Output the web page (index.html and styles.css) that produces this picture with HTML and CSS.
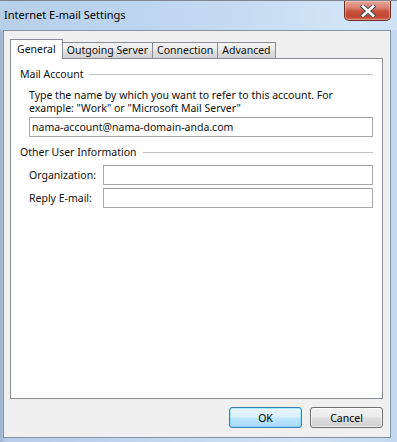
FILE: index.html
```html
<!DOCTYPE html>
<html lang="en">
<head>
<meta charset="utf-8">
<title>Internet E-mail Settings</title>
<link rel="stylesheet" href="styles.css">
</head>
<body>
<div class="window">
  <div class="titlebar">
    <span class="title">Internet E-mail Settings</span>
    <button class="close" aria-label="Close">
      <svg width="16" height="12" viewBox="0 0 16 12">
        <path d="M3 1.5 L13 10.5 M13 1.5 L3 10.5" stroke="#4a4f57" stroke-width="4.6" stroke-linecap="square" fill="none"/>
        <path d="M3 1.5 L13 10.5 M13 1.5 L3 10.5" stroke="#ffffff" stroke-width="2.6" stroke-linecap="square" fill="none"/>
      </svg>
    </button>
  </div>
  <div class="client">
    <div class="tabs">
      <div class="tab active">General</div>
      <div class="tab">Outgoing Server</div>
      <div class="tab">Connection</div>
      <div class="tab">Advanced</div>
    </div>
    <div class="panel">
      <div class="group-head"><span>Mail Account</span><span class="rule"></span></div>
      <p class="desc">Type the name by which you want to refer to this account. For<br>example: "Work" or "Microsoft Mail Server"</p>
      <div class="field wide">nama-account@nama-domain-anda.com</div>
      <div class="group-head second"><span>Other User Information</span><span class="rule"></span></div>
      <div class="row first"><span class="label">Organization:</span><div class="field"></div></div>
      <div class="row"><span class="label">Reply E-mail:</span><div class="field"></div></div>
    </div>
    <div class="buttons">
      <button class="btn default">OK</button>
      <button class="btn">Cancel</button>
    </div>
  </div>
</div>
</body>
</html>
```
FILE: styles.css
```css
* { box-sizing: border-box; }
html, body { margin: 0; padding: 0; }
body {
  font-family: "Noto Sans", "Open Sans", "DejaVu Sans", sans-serif;
  font-size: 10.5px;
  color: #111;
  background: #b9cfe6;
}
.window {
  width: 397px;
  height: 442px;
  display: flex;
  flex-direction: column;
  background: linear-gradient(90deg, #9fb4cc 0px, #b7cde6 6px, #c2d7ee 40%, #cfe2f6 75%, #c4d9ef 100%);
}
.titlebar {
  height: 30px;
  flex: none;
  display: flex;
  align-items: flex-start;
  border-top: 1px solid #7d8692;
  background: linear-gradient(90deg, #b8cfe8 0%, #bcd4ee 30%, #c6dbf1 60%, #d3e6f9 90%, #cfe2f5 100%);
}
.title {
  font-size: 11px;
  line-height: 14px;
  margin: 7px 0 0 4px;
  color: #000;
  flex: 1;
}
.close {
  width: 47px;
  height: 20px;
  margin: 0 6px 0 0;
  padding: 0;
  border: 1px solid #6b2c22;
  border-top: none;
  border-radius: 0 0 5px 5px;
  background: linear-gradient(#e9a99c 0%, #d9806f 35%, #c7503e 55%, #c14633 80%, #d0644f 100%);
  box-shadow: inset 0 0 0 1px rgba(255, 210, 200, 0.45);
  display: flex;
  align-items: center;
  justify-content: center;
}
.close svg { display: block; margin-top: 1px; }
.client {
  flex: 1;
  margin: 0 6px 4px 3px;
  border: 1px solid #7f93aa;
  background: #f0f0f0;
  padding: 8px 7px 0 6px;
  display: flex;
  flex-direction: column;
}
.tabs {
  display: flex;
  align-items: flex-end;
  height: 20px;
  margin-bottom: -1px;
  position: relative;
  z-index: 1;
}
.tab {
  height: 16px;
  margin-bottom: 1px;
  margin-left: -1px;
  padding: 0 4px;
  border: 1px solid #898c95;
  border-bottom: none;
  line-height: 14px;
  background: linear-gradient(#f3f3f3 0%, #ebebeb 45%, #dedede 55%, #d3d3d3 100%);
  white-space: nowrap;
}
.tab.active {
  height: 20px;
  margin: 0;
  padding: 0 6px;
  line-height: 18px;
  background: #fff;
}
.panel {
  height: 341px;
  flex: none;
  border: 1px solid #898c95;
  background: #fff;
  padding: 9px 9px 0 9px;
}
.group-head {
  display: flex;
  align-items: center;
  height: 13px;
  line-height: 13px;
}
.group-head .rule {
  flex: 1;
  height: 1px;
  margin-left: 6px;
  background: #c2c2c2;
}
.group-head.second { margin-top: 9px; }
.desc {
  margin: 8px 0 0 9px;
  line-height: 13px;
}
.field {
  height: 20px;
  border: 1px solid #a7a9ae;
  border-top-color: #999ba0;
  background: #fff;
  line-height: 18px;
  padding-left: 2px;
}
.field.wide { margin: 2px 0 0 9px; }
.row {
  display: flex;
  align-items: center;
  margin: 3px 0 0 9px;
}
.row.first { margin-top: 6px; }
.row .label { width: 74px; flex: none; }
.row .field { flex: 1; }
.buttons {
  display: flex;
  justify-content: flex-end;
  gap: 8px;
  margin-top: 8px;
}
.btn {
  width: 73px;
  height: 21px;
  font: inherit;
  color: #000;
  padding: 0;
  border: 1px solid #707070;
  border-radius: 3px;
  background: linear-gradient(#f2f2f2 0%, #ebebeb 45%, #dddddd 55%, #cfcfcf 100%);
  box-shadow: inset 0 0 0 1px rgba(255, 255, 255, 0.7);
}
.btn.default {
  border-color: #3c7fb1;
  background: linear-gradient(#eaf6fd 0%, #d9f0fc 45%, #bee6fd 55%, #a7d9f5 100%);
  box-shadow: inset 0 0 0 1px #48d5fa66;
}
```
